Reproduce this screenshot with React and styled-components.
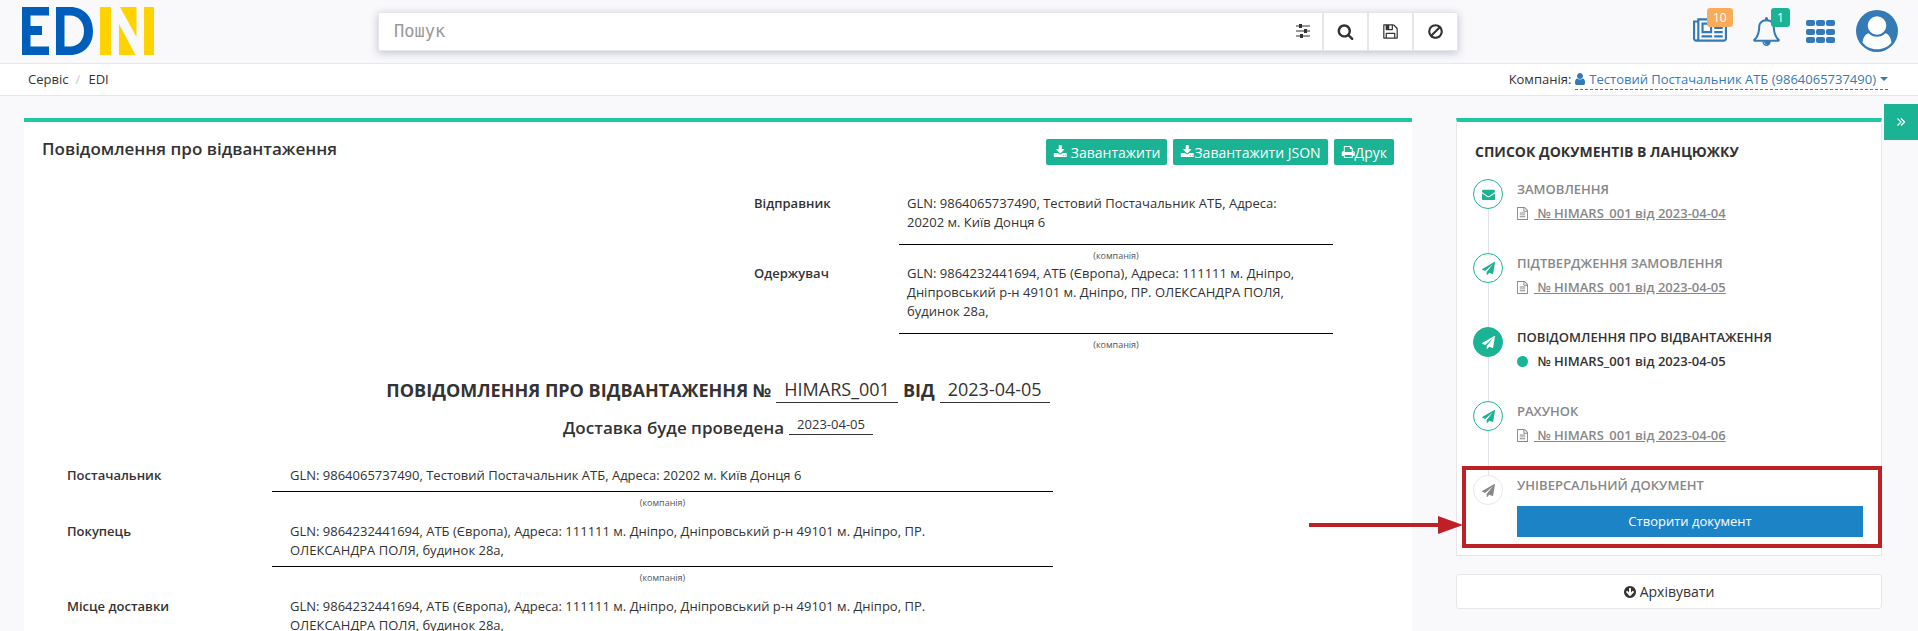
import React from "react";
import styled, { createGlobalStyle, css } from "styled-components";

const color = {
  page: "#f9f9fb",
  line: "#e7e7e9",
  text: "#333333",
  muted: "#888888",
  link: "#337ab7",
  green: "#1ab394",
  accent: "#1fc8a4",
  orange: "#f8ac59",
  blue: "#1c84c6",
  red: "#bd2126",
};

const GlobalStyle = createGlobalStyle`
  *, *::before, *::after { box-sizing: border-box; }
  body {
    margin: 0;
    background: ${color.page};
    color: ${color.text};
    font: 13px/19px "Open Sans", "Noto Sans", sans-serif;
  }
  h1, h2, h3, p, dl, dd, ol { margin: 0; padding: 0; }
  ol { list-style: none; }
  button, input { font: inherit; color: inherit; }
  button { cursor: pointer; }
  a { color: inherit; text-decoration: none; }
`;

/* ---------- icons ---------- */

const paths = {
  search:
    "M1216 832q0-185-131.5-316.500t-316.500-131.500-316.500 131.500-131.500 316.500 131.500 316.500 316.500 131.500 316.500-131.500 131.500-316.500zm512 832q0 52-38 90t-90 38q-54 0-90-38l-343-342q-179 124-399 124-143 0-273.500-55.500t-225-150-150-225-55.500-273.500 55.500-273.500 150-225 225-150 273.500-55.500 273.500 55.500 225 150 150 225 55.500 273.500q0 220-124 399l343 343q37 37 37 90z",
  floppy:
    "M512 1536h768v-384h-768v384zm896 0h128v-896q0-14-10-38.500t-20-34.500l-281-281q-10-10-34-20t-39-10v416q0 40-28 68t-68 28h-576q-40 0-68-28t-28-68v-416h-128v1280h128v-416q0-40 28-68t68-28h832q40 0 68 28t28 68v416zm-384-928v-320q0-13-9.500-22.500t-22.500-9.500h-192q-13 0-22.500 9.500t-9.500 22.500v320q0 13 9.500 22.500t22.500 9.500h192q13 0 22.500-9.500t9.500-22.500zm640 32v928q0 40-28 68t-68 28h-1344q-40 0-68-28t-28-68v-1344q0-40 28-68t68-28h928q40 0 88 20t76 48l280 280q28 28 48 76t20 88z",
  ban:
    "M1440 893q0-161-87-295l-754 753q137 89 297 89 111 0 211.500-43.500t173.500-116.500 116-174.500 43-212.500zm-999 299l755-754q-135-91-300-91-148 0-273 73t-198 199-73 274q0 162 89 299zm1223-299q0 157-61 300t-163.500 246-245 164-298.500 61-298.500-61-245-164-163.500-246-61-300 61-299.500 163.500-245.500 245-164 298.500-61 298.500 61 245 164 163.500 245.500 61 299.500z",
  newspaper:
    "M1024 512h-384v384h384v-384zm128 640v128h-640v-128h640zm0-768v640h-640v-640h640zm640 768v128h-512v-128h512zm0-256v128h-512v-128h512zm0-256v128h-512v-128h512zm0-256v128h-512v-128h512zm-1536 960v-960h-128v960q0 26 19 45t45 19 45-19 19-45zm1664 0v-1088h-1536v1088q0 33-11 64h1483q26 0 45-19t19-45zm128-1216v1216q0 80-56 136t-136 56h-1664q-80 0-136-56t-56-136v-1088h256v-128h1792z",
  bell:
    "M912 1696q0-16-16-16-59 0-101.500-42.500t-42.500-101.500q0-16-16-16t-16 16q0 73 51.500 124.500t124.500 51.500q16 0 16-16zm-666-288h1300q-266-300-266-832 0-51-24-105t-69-103-121.500-80.500-169.500-31.500-169.500 31.500-121.500 80.500-69 103-24 105q0 532-266 832zm1482 0q0 52-38 90t-90 38h-448q0 106-75 181t-181 75-181-75-75-181h-448q-52 0-90-38t-38-90q50-42 91-88t85-119.500 74.500-158.500 50-206 19.500-260q0-152 117-282.500t307-158.500q-8-19-8-39 0-40 28-68t68-28 68 28 28 68q0 20-8 39 190 28 307 158.500t117 282.500q0 139 19.500 260t50 206 74.500 158.500 85 119.500 91 88z",
  plane:
    "M1764 11q33 24 27 64l-256 1536q-5 29-32 45-14 8-31 8-11 0-24-5l-453-185-242 295q-18 23-49 23-13 0-22-4-19-7-30.500-23.500t-11.500-36.500v-349l864-1059-1069 925-395-162q-37-14-40-55-2-40 32-59l1664-960q15-9 32-9 20 0 36 11z",
  envelope:
    "M1792 710v794q0 66-47 113t-113 47h-1472q-66 0-113-47t-47-113v-794q44 49 101 87 362 246 497 345 57 42 92.500 65.500t94.500 48 110 24.500h2q51 0 110-24.500t94.500-48 92.500-65.500q170-123 498-345 57-39 100-87zm0-294q0 79-49 151t-122 123q-376 261-468 325-10 7-42.500 30.500t-54 38-52 32.500-57.500 27-50 9h-2q-23 0-50-9t-57.500-27-52-32.500-54-38-42.500-30.500q-91-64-262-182.500t-205-142.500q-62-42-117-115.500t-55-136.500q0-78 41.500-130t118.500-52h1472q65 0 112.500 47t47.500 113z",
  file:
    "M1596 380q28 28 48 76t20 88v1152q0 40-28 68t-68 28h-1344q-40 0-68-28t-28-68v-1600q0-40 28-68t68-28h896q40 0 88 20t76 48zm-444-244v376h376q-10-29-22-41l-313-313q-12-12-41-22zm384 1528v-1024h-416q-40 0-68-28t-28-68v-416h-768v1536h1280zm-1024-864q0-14 9-23t23-9h704q14 0 23 9t9 23v64q0 14-9 23t-23 9h-704q-14 0-23-9t-9-23v-64zm736 224q14 0 23 9t9 23v64q0 14-9 23t-23 9h-704q-14 0-23-9t-9-23v-64q0-14 9-23t23-9h704zm0 256q14 0 23 9t9 23v64q0 14-9 23t-23 9h-704q-14 0-23-9t-9-23v-64q0-14 9-23t23-9h704z",
  download:
    "M1344 1344q0-26-19-45t-45-19-45 19-19 45 19 45 45 19 45-19 19-45zm256 0q0-26-19-45t-45-19-45 19-19 45 19 45 45 19 45-19 19-45zm128-224v320q0 40-28 68t-68 28h-1472q-40 0-68-28t-28-68v-320q0-40 28-68t68-28h465l135 136q58 56 136 56t136-56l136-136h464q40 0 68 28t28 68zm-325-569q17 41-14 70l-448 448q-18 19-45 19t-45-19l-448-448q-31-29-14-70 17-39 59-39h256v-448q0-26 19-45t45-19h256q26 0 45 19t19 45v448h256q42 0 59 39z",
  print:
    "M448 1536h896v-256h-896v256zm0-640h896v-384h-160q-40 0-68-28t-28-68v-160h-640v640zm1152 64q0-26-19-45t-45-19-45 19-19 45 19 45 45 19 45-19 19-45zm128 0v416q0 13-9.500 22.500t-22.500 9.500h-224v160q0 40-28 68t-68 28h-960q-40 0-68-28t-28-68v-160h-224q-13 0-22.500-9.500t-9.500-22.500v-416q0-79 56.500-135.500t135.500-56.500h64v-544q0-40 28-68t68-28h672q40 0 88 20t76 48l152 152q28 28 48 76t20 88v256h64q79 0 135.500 56.500t56.500 135.500z",
  arrowDown:
    "M1412 897q0-27-18-45l-91-91q-18-18-45-18t-45 18l-189 189v-502q0-26-19-45t-45-19h-128q-26 0-45 19t-19 45v502l-189-189q-19-19-45-19t-45 19l-91 91q-18 18-18 45t18 45l362 362 91 91q18 18 45 18t45-18l91-91 362-362q18-18 18-45zm252-1q0 209-103 385.500t-279.500 279.500-385.500 103-385.500-103-279.500-279.500-103-385.500 103-385.500 279.500-279.500 385.500-103 385.500 103 279.500 279.500 103 385.500z",
  user:
    "M1536 1399q0 109-62.500 187t-150.500 78h-854q-88 0-150.500-78t-62.500-187q0-85 8.500-160.500t31.500-152 58.500-131 94-89 134.500-34.500q131 128 313 128t313-128q76 0 134.500 34.500t94 89 58.500 131 31.500 152 8.500 160.500zm-256-887q0 159-112.500 271.500t-271.500 112.500-271.500-112.500-112.500-271.500 112.500-271.500 271.500-112.500 271.500 112.500 112.500 271.500z",
};

const IconSvg = styled.svg`
  display: block;
  flex: none;
  fill: currentColor;
`;

function Icon({ name, size = 14, x = 0, width = 1792 }) {
  return (
    <IconSvg
      width={Math.round((size * width) / 1792)}
      height={size}
      viewBox={`${x} 0 ${width} 1792`}
      aria-hidden="true"
    >
      <path d={paths[name]} />
    </IconSvg>
  );
}

function Logo() {
  return (
    <IconSvg width="132" height="48" viewBox="0 0 132 48" role="img" aria-label="EDIN">
      <g fill="#005ebb">
        <path d="M0 0h27v8.500H8.500V19H20v9H8.500v11.500H27V48H0z" />
        <path fillRule="evenodd" d="M34 0h14c14 0 23 10 23 24s-9 24-23 24H34zM42.500 8.500v31H48c8.500 0 14-6.500 14-15.500S56.500 8.500 48 8.500z" />
      </g>
      <g fill="#ffd200">
        <path d="M78 0h11v48H78zM122 0h10v48h-10zM98 0h16.500v30zM97 17v31h16.500z" />
      </g>
    </IconSvg>
  );
}

function SlidersIcon() {
  return (
    <IconSvg width="14" height="14" viewBox="0 0 14 14" aria-hidden="true">
      <path d="M0 1.500h14v1H0zM0 6.500h14v1H0zM0 11.500h14v1H0z" />
      <path d="M3 0h3v4H3zM8 5h3v4H8zM4 10h3v4H4z" />
    </IconSvg>
  );
}

function GridIcon() {
  const cells = [0, 10, 20];
  return (
    <IconSvg width="29" height="23" viewBox="0 0 29 23" aria-hidden="true">
      {cells.map((x) =>
        [0, 9, 17].map((y) => <rect key={`${x}-${y}`} x={x} y={y} width="9" height="6" rx="2" />)
      )}
    </IconSvg>
  );
}

function AvatarIcon() {
  return (
    <IconSvg width="42" height="42" viewBox="0 0 42 42" aria-hidden="true">
      <circle cx="21" cy="21" r="21" />
      <path
        fill="#fff"
        d="M6.500 32.500C7 28 9 24.500 12.500 23.200c2.300 2.300 5.200 3.600 8.500 3.600s6.200-1.300 8.500-3.600C33 24.500 35 28 35.500 32.500 32 37 27 39.300 21 39.300S10 37 6.500 32.500z"
      />
      <circle cx="21" cy="15.500" r="9.300" fill="#fff" />
    </IconSvg>
  );
}

function ChevronsIcon() {
  return (
    <IconSvg width="8" height="8" viewBox="0 0 8 8" aria-hidden="true">
      <path
        d="M.5.500 4 4 .5 7.500M4 .5 7.500 4 4 7.500"
        fill="none"
        stroke="currentColor"
        strokeWidth="1.300"
      />
    </IconSvg>
  );
}

/* ---------- page shell ---------- */

const Shell = styled.div`
  position: relative;
  display: flex;
  flex-direction: column;
  height: 100vh;
  overflow: hidden;
`;

const Header = styled.header`
  display: grid;
  grid-template-columns: 356fr 1080fr 440fr;
  align-items: center;
  flex: none;
  height: 64px;
  padding: 0 20px 1px 22px;
  border-bottom: 1px solid ${color.line};
`;

const HomeLink = styled.a`
  display: flex;
`;

const SearchBar = styled.form`
  display: flex;
  height: 39px;
  border: 1px solid #e5e6e9;
  background: #fff;
  box-shadow: 0 2px 8px rgba(60, 70, 120, 0.3);
`;

const SearchInput = styled.input`
  flex: 1;
  min-width: 0;
  padding: 0 15px;
  border: 0;
  outline: 0;
  background: transparent;
  font: 17px/22px "DejaVu Sans Mono", "Liberation Mono", monospace;

  &::placeholder {
    color: #999;
    opacity: 1;
  }
`;

const SearchButton = styled.button`
  display: flex;
  align-items: center;
  justify-content: center;
  width: ${(p) => (p.$plain ? 38 : 45)}px;
  padding: 0;
  border: 0;
  border-left: ${(p) => (p.$plain ? 0 : 2)}px solid #e5e6e9;
  background: transparent;
`;

const HeaderTools = styled.nav`
  display: flex;
  align-items: center;
  justify-content: flex-end;
  gap: 21px;
  color: ${color.link};
`;

const ToolGroup = styled.div`
  display: flex;
  align-items: center;
  gap: 26px;
`;

const ToolButton = styled.button`
  position: relative;
  display: block;
  padding: 0;
  border: 0;
  background: transparent;
`;

const Badge = styled.span`
  position: absolute;
  left: ${(p) => (p.$tone === "orange" ? 14 : 18)}px;
  bottom: 19px;
  padding: 0 6px;
  border-radius: 3px;
  background: ${(p) => color[p.$tone]};
  color: #fff;
  font-size: 12px;
`;

const SubBar = styled.div`
  display: flex;
  align-items: center;
  justify-content: space-between;
  flex: none;
  height: 32px;
  padding: 0 30px 0 28px;
  border-bottom: 1px solid ${color.line};
  background: #fff;
`;

const Crumbs = styled.nav`
  display: flex;
  gap: 7px;
`;

const CrumbSlash = styled.span`
  width: 6px;
  color: #ccc;
`;

const Company = styled.div`
  display: flex;
  gap: 4px;
`;

const CompanyLink = styled.a`
  display: flex;
  align-items: center;
  gap: 4px;
  border-bottom: 1px dashed ${color.link};
  color: ${color.link};
`;

const Caret = styled.span`
  border: 4px solid transparent;
  border-top-color: currentColor;
  border-bottom: 0;
`;

const SideTab = styled.button`
  position: absolute;
  top: 104px;
  right: 0;
  display: flex;
  align-items: center;
  justify-content: center;
  width: 34px;
  height: 36px;
  padding: 0;
  border: 0;
  background: ${color.green};
  color: #fff;
`;

const Content = styled.div`
  display: flex;
  flex: 1;
  gap: 44px;
  min-height: 0;
  padding: 22px 36px 0 24px;
`;

/* ---------- document ---------- */

const DocumentCard = styled.main`
  flex: 1;
  min-width: 0;
  padding: 17px 18px 0;
  border-top: 4px solid ${color.accent};
  background: #fff;
`;

const DocumentHead = styled.div`
  display: flex;
  justify-content: space-between;
`;

const DocumentTitle = styled.h1`
  font-size: 17px;
  font-weight: 600;
  line-height: 20px;
`;

const Actions = styled.div`
  display: flex;
  gap: 6px;
`;

const ActionButton = styled.button`
  display: flex;
  align-items: center;
  gap: ${(p) => (p.$spaced ? 4 : 0)}px;
  height: 26px;
  padding: 0 7px;
  border: 0;
  border-radius: 2px;
  background: ${color.green};
  color: #fff;
  font-size: 14px;
`;

const Parties = styled.dl`
  display: flex;
  flex-direction: column;
  margin: 29px 61px 0 712px;
`;

const Details = styled.dl`
  display: flex;
  flex-direction: column;
  gap: 11px;
  margin: 26px 341px 0 25px;
`;

const PartyRow = styled.div`
  display: grid;
  grid-template-columns: ${(p) => (p.$wide ? 205 : 145)}px minmax(0, 1fr);
`;

const PartyLabel = styled.dt`
  font-weight: 600;
`;

const PartyValue = styled.dd`
  padding: ${(p) => (p.$wide ? "0 60px 6px 18px" : "0 18px 12px 8px")};
  border-bottom: 1px solid #000;
`;

const PartyNote = styled.dd`
  grid-column: 2;
  padding-top: 3px;
  color: #555;
  font-size: 9px;
  line-height: 16px;
  text-align: center;
`;

const Heading = styled.h2`
  display: flex;
  align-items: flex-end;
  justify-content: center;
  gap: 5px;
  margin-top: ${(p) => (p.$small ? 12 : 24)}px;
  font-size: ${(p) => (p.$small ? 17 : 18)}px;
  font-weight: ${(p) => (p.$small ? 600 : 700)};
  line-height: 25px;
`;

const Filled = styled.span`
  padding: 0 8px;
  border-bottom: 1px solid ${color.text};
  font-weight: 400;
  ${(p) =>
    p.$small &&
    css`
      align-self: flex-start;
      font-size: 13px;
      line-height: 19px;
    `}
`;

/* ---------- document chain ---------- */

const Sidebar = styled.aside`
  flex: none;
  width: 426px;
`;

const ChainCard = styled.section`
  padding: 20px 18px 18px 16px;
  border: 1px solid ${color.line};
  border-top: 4px solid ${color.accent};
  background: #fff;
`;

const ChainTitle = styled.h2`
  padding-left: 2px;
  font-size: 14px;
  font-weight: 700;
  line-height: 20px;
`;

const Chain = styled.ol`
  margin-top: 17px;
`;

const Step = styled.li`
  position: relative;
  display: flex;
  gap: 14px;

  &:not(:last-child) {
    min-height: 74px;
  }

  &:not(:last-child)::before {
    content: "";
    position: absolute;
    top: 30px;
    bottom: 0;
    left: 15px;
    width: 1px;
    background: #e0e3e7;
  }
`;

const stepTones = {
  done: css`
    border-color: ${color.green};
    color: ${color.green};
  `,
  current: css`
    border-color: ${color.green};
    background: ${color.green};
    color: #fff;
  `,
  next: css`
    border-color: ${color.line};
    color: ${color.muted};
  `,
};

const StepMark = styled.span`
  display: flex;
  align-items: center;
  justify-content: center;
  flex: none;
  width: 30px;
  height: 30px;
  border: 1px solid;
  border-radius: 50%;
  background: #fff;
  ${(p) => stepTones[p.$tone]}
`;

const StepBody = styled.div`
  flex: 1;
  color: ${(p) => (p.$active ? color.text : color.muted)};
  font-weight: 600;
`;

const StepName = styled.h3`
  font-size: 13px;
  font-weight: 600;
  line-height: 20px;
`;

const StepDocument = styled.div`
  display: flex;
  align-items: center;
  gap: 6px;
  margin-top: 5px;
`;

const StepLink = styled.a`
  text-decoration: underline;
  white-space: pre;
`;

const StepText = styled.span`
  white-space: pre;
`;

const Dot = styled.span`
  width: 11px;
  height: 11px;
  border-radius: 50%;
  background: ${color.green};
`;

const CreateButton = styled.button`
  display: block;
  width: 100%;
  height: 31px;
  margin-top: 11px;
  padding: 0;
  border: 0;
  background: ${color.blue};
  color: #fff;
  font-weight: 400;
`;

const Callout = styled.div`
  position: absolute;
  inset: -9px -19px auto -11px;
  height: 82px;
  border: 4px solid ${color.red};
  pointer-events: none;
`;

const CalloutArrow = styled.svg`
  position: absolute;
  top: 46px;
  right: calc(100% + 3px);
  fill: ${color.red};
`;

const ArchiveButton = styled.button`
  display: flex;
  align-items: center;
  justify-content: center;
  gap: 4px;
  width: 100%;
  height: 35px;
  margin-top: 18px;
  padding: 0;
  border: 1px solid #e5e6e9;
  border-radius: 3px;
  background: #fff;
  font-size: 14px;
`;

const parties = [
  ["Відправник", "GLN: 9864065737490, Тестовий Постачальник АТБ, Адреса: 20202 м. Київ Донця 6"],
  [
    "Одержувач",
    "GLN: 9864232441694, АТБ (Європа), Адреса: 111111 м. Дніпро, Дніпровський р-н 49101 м. Дніпро, ПР. ОЛЕКСАНДРА ПОЛЯ, будинок 28а,",
  ],
];

const details = [
  ["Постачальник", parties[0][1]],
  ["Покупець", parties[1][1]],
  ["Місце доставки", parties[1][1]],
];

const steps = [
  { name: "ЗАМОВЛЕННЯ", date: "2023-04-04", icon: "envelope", tone: "done" },
  { name: "ПІДТВЕРДЖЕННЯ ЗАМОВЛЕННЯ", date: "2023-04-05", icon: "plane", tone: "done" },
  { name: "ПОВІДОМЛЕННЯ ПРО ВІДВАНТАЖЕННЯ", date: "2023-04-05", icon: "plane", tone: "current" },
  { name: "РАХУНОК", date: "2023-04-06", icon: "plane", tone: "done" },
  { name: "УНІВЕРСАЛЬНИЙ ДОКУМЕНТ", icon: "plane", tone: "next" },
];

function Party({ label, value, wide }) {
  return (
    <PartyRow $wide={wide}>
      <PartyLabel>{label}</PartyLabel>
      <PartyValue $wide={wide}>{value}</PartyValue>
      <PartyNote>(компанія)</PartyNote>
    </PartyRow>
  );
}

function ChainStep({ name, date, icon, tone }) {
  const current = tone === "current";
  return (
    <Step>
      <StepMark $tone={tone}>
        <Icon name={icon} size={13} />
      </StepMark>
      <StepBody $active={current}>
        <StepName>{name}</StepName>
        {date && (
          <StepDocument>
            {current ? <Dot /> : <Icon name="file" size={13} x={128} width={1536} />}
            {current ? (
              <StepText>{` № HIMARS_001 від ${date}`}</StepText>
            ) : (
              <StepLink href="#">{` № HIMARS_001 від ${date}`}</StepLink>
            )}
          </StepDocument>
        )}
        {!date && <CreateButton type="button">Створити документ</CreateButton>}
      </StepBody>
      {!date && (
        <Callout>
          <CalloutArrow width="154" height="18" viewBox="0 0 154 18" aria-hidden="true">
            <path d="M0 7h129V0l25 9-25 9v-7H0z" />
          </CalloutArrow>
        </Callout>
      )}
    </Step>
  );
}

export default function App() {
  return (
    <Shell>
      <GlobalStyle />
      <Header>
        <HomeLink href="#" aria-label="EDIN">
          <Logo />
        </HomeLink>
        <SearchBar role="search" onSubmit={(e) => e.preventDefault()}>
          <SearchInput type="text" placeholder="Пошук" aria-label="Пошук" />
          <SearchButton type="button" $plain aria-label="Фільтри">
            <SlidersIcon />
          </SearchButton>
          <SearchButton type="submit" aria-label="Шукати">
            <Icon name="search" size={17} />
          </SearchButton>
          <SearchButton type="button" aria-label="Зберегти">
            <Icon name="floppy" size={17} />
          </SearchButton>
          <SearchButton type="button" aria-label="Очистити">
            <Icon name="ban" size={17} />
          </SearchButton>
        </SearchBar>
        <HeaderTools>
          <ToolGroup>
            <ToolButton type="button" aria-label="Новини">
              <Icon name="newspaper" size={30} width={2048} />
              <Badge $tone="orange">10</Badge>
            </ToolButton>
            <ToolButton type="button" aria-label="Сповіщення">
              <Icon name="bell" size={29} x={64} width={1664} />
              <Badge $tone="green">1</Badge>
            </ToolButton>
            <ToolButton type="button" aria-label="Сервіси">
              <GridIcon />
            </ToolButton>
          </ToolGroup>
          <ToolButton type="button" aria-label="Профіль">
            <AvatarIcon />
          </ToolButton>
        </HeaderTools>
      </Header>
      <SubBar>
        <Crumbs>
          <a href="#">Сервіс</a>
          <CrumbSlash>/</CrumbSlash>
          <a href="#">EDI</a>
        </Crumbs>
        <Company>
          <span>Компанія:</span>
          <CompanyLink href="#">
            <Icon name="user" size={14} x={256} width={1280} />
            Тестовий Постачальник АТБ (9864065737490)
            <Caret />
          </CompanyLink>
        </Company>
      </SubBar>
      <Content>
        <DocumentCard>
          <DocumentHead>
            <DocumentTitle>Повідомлення про відвантаження</DocumentTitle>
            <Actions>
              <ActionButton type="button" $spaced>
                <Icon name="download" size={14} width={1728} />
                Завантажити
              </ActionButton>
              <ActionButton type="button">
                <Icon name="download" size={14} width={1728} />
                Завантажити JSON
              </ActionButton>
              <ActionButton type="button">
                <Icon name="print" size={14} width={1728} />
                Друк
              </ActionButton>
            </Actions>
          </DocumentHead>
          <Parties>
            {parties.map(([label, value]) => (
              <Party key={label} label={label} value={value} />
            ))}
          </Parties>
          <Heading>
            ПОВІДОМЛЕННЯ ПРО ВІДВАНТАЖЕННЯ №<Filled>HIMARS_001</Filled>
            ВІД<Filled>2023-04-05</Filled>
          </Heading>
          <Heading $small>
            Доставка буде проведена<Filled $small>2023-04-05</Filled>
          </Heading>
          <Details>
            {details.map(([label, value]) => (
              <Party key={label} label={label} value={value} wide />
            ))}
          </Details>
        </DocumentCard>
        <Sidebar>
          <ChainCard>
            <ChainTitle>СПИСОК ДОКУМЕНТІВ В ЛАНЦЮЖКУ</ChainTitle>
            <Chain>
              {steps.map((step) => (
                <ChainStep key={step.name} {...step} />
              ))}
            </Chain>
          </ChainCard>
          <ArchiveButton type="button">
            <Icon name="arrowDown" size={14} x={128} width={1536} />
            Архівувати
          </ArchiveButton>
        </Sidebar>
      </Content>
      <SideTab type="button" aria-label="Згорнути панель">
        <ChevronsIcon />
      </SideTab>
    </Shell>
  );
}
